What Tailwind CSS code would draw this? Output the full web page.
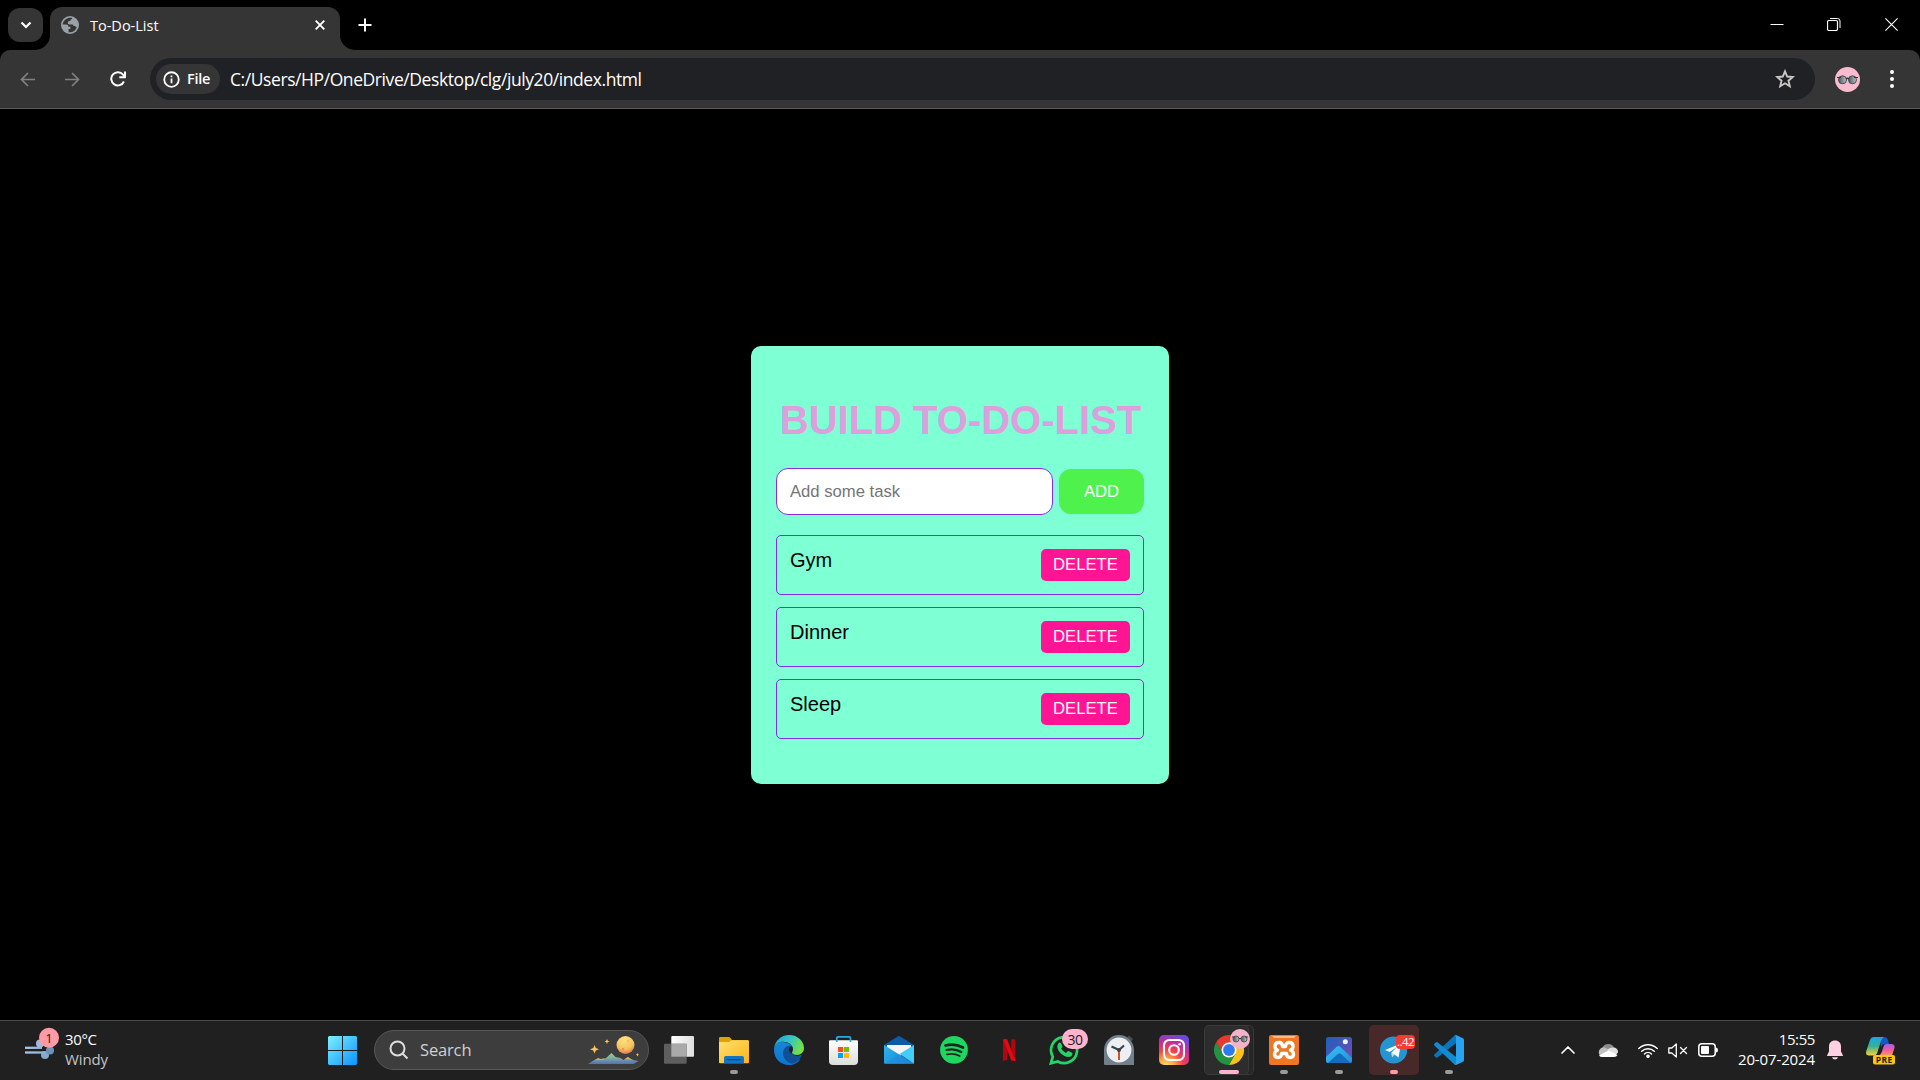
<!DOCTYPE html>
<html lang="en">
<head>
<meta charset="utf-8">
<title>To-Do-List</title>
<script src="https://cdn.jsdelivr.net/npm/@tailwindcss/browser@4"></script>
</head>
<body class="flex h-[1080px] w-[1920px] flex-col overflow-hidden bg-black font-['Open_Sans','Noto_Sans',sans-serif] text-white">

<!-- Tab strip -->
<header class="flex h-[50px] shrink-0 items-start bg-black">
  <button class="mt-2 ml-2 flex h-[34px] w-[35px] items-center justify-center rounded-xl bg-[#353535]">
    <svg class="h-[10px] w-[12px]" viewBox="0 0 12 10" fill="none" stroke="#fff" stroke-width="2.2"><path d="M1.5 2.5 6 7l4.500-4.500"/></svg>
  </button>
  <div class="relative mt-[7px] ml-[7px] flex h-[43px] w-[290px] items-start rounded-t-xl bg-[#353535]">
    <svg class="absolute bottom-0 -left-[15px] size-[15px]" viewBox="0 0 15 15"><path fill="#353535" d="M15 0v15H0A15 15 0 0 0 15 0"/></svg>
    <svg class="absolute -right-[15px] bottom-0 size-[15px]" viewBox="0 0 15 15"><path fill="#353535" d="M0 0v15h15A15 15 0 0 1 0 0"/></svg>
    <svg class="mt-[9px] ml-[11px] size-[18px]" viewBox="0 0 18 18"><circle cx="9" cy="9" r="9" fill="#9aa0a6"/><path fill="#353535" d="M6.800 2.200C3.800 3 1.800 5.700 1.700 8.600h3.400c1.700 0 2.200.9 2.300 2.200h2v2.100H7.600v3.300c3.700.7 7-1.500 8.200-4.900-.8 0-1.300-.4-1.600-1.200-1.300.1-2.100-.4-2.400-1.600H8.600c-1.200 0-1.800-.7-1.800-1.700 0-1.200.8-1.700 2-1.700h.5c0-1.200.6-1.900 1.800-2V2.100c-1.400-.5-2.800-.4-4.300.1Z"/></svg>
    <span class="mt-[7px] ml-[11px] w-[224px] text-[14.500px] leading-6">To-Do-List</span>
    <svg class="absolute top-[13px] left-[265px] size-[10px]" viewBox="0 0 10 10" stroke="#fff" stroke-width="1.900"><path d="m.7.7 8.600 8.600M9.300.7.7 9.300"/></svg>
  </div>
  <svg class="mt-[18px] ml-[18px] size-[14px]" viewBox="0 0 14 14" stroke="#fff" stroke-width="2"><path d="M7 .5v13M.5 7h13"/></svg>
  <div class="mt-[18px] mr-[22px] ml-auto flex gap-[43px]">
    <svg class="h-[13px] w-[14px]" viewBox="0 0 14 13"><path stroke="#fff" d="M.5 6.500h13"/></svg>
    <svg class="h-[13px] w-[14px]" viewBox="0 0 14 13" fill="none" stroke="#fff"><rect x=".5" y="2.500" width="10" height="10" rx="1.500" stroke-width="1.200"/><path d="M3 .5h7.500A2.500 2.500 0 0 1 13 3v7"/></svg>
    <svg class="ml-[1px] size-[13px]" viewBox="0 0 13 13" stroke="#fff" stroke-width="1.100"><path d="m.4.4 12.200 12.200M12.600.4.4 12.600"/></svg>
  </div>
</header>

<!-- Address toolbar -->
<nav class="flex h-[59px] shrink-0 items-center rounded-t-[10px] border-b border-[#5c5c5c] bg-[#353535]">
  <div class="ml-5 flex items-center gap-[30px]">
    <svg class="size-[15px]" viewBox="0 0 15 15" fill="none" stroke="#818181" stroke-width="1.700"><path d="M15 7.500H1.500M8 1 1.500 7.500 8 14"/></svg>
    <svg class="size-[15px]" viewBox="0 0 15 15" fill="none" stroke="#818181" stroke-width="1.700"><path d="M0 7.500h13.500M7 1l6.500 6.500L7 14"/></svg>
    <svg class="size-4" viewBox="0 0 16 16" fill="none" stroke="#fff" stroke-width="2"><path d="M13.900 10.500A6.600 6.600 0 1 1 13 3.700L15 6"/><path d="M15 .5v5.800H9.300"/></svg>
  </div>
  <div class="ml-6 flex h-[42px] w-[1665px] items-center rounded-full bg-[#202124] pr-5 pl-[6px]">
    <div class="flex h-[30px] w-16 items-center rounded-full bg-[#353535] pl-[7px]">
      <svg class="size-[17px]" viewBox="0 0 18 18" fill="none" stroke="#fff" stroke-width="1.900"><circle cx="9" cy="9" r="7.700"/><path d="M9 8v5M9 4.800v1.900"/></svg>
      <span class="ml-[7px] text-[14.500px] font-semibold tracking-[-0.3px]">File</span>
    </div>
    <span class="ml-[10px] text-[17.500px] tracking-[-0.420px] whitespace-nowrap">C:/Users/HP/OneDrive/Desktop/clg/july20/index.html</span>
    <svg class="ml-auto size-5" viewBox="0 0 20 20" fill="none" stroke="#c7c7c7" stroke-width="1.900"><path d="m10 2.300 2.200 5.200 5.600.5-4.300 3.700 1.300 5.500L10 14.300l-4.800 2.900 1.300-5.500L2.200 8l5.600-.5z"/></svg>
  </div>
  <svg class="ml-5 size-[25px]" viewBox="0 0 25 25"><defs><linearGradient id="lens"><stop stop-color="#46555b"/><stop offset="1" stop-color="#b5c8cb"/></linearGradient></defs><circle cx="12.500" cy="12.500" r="12.500" fill="#f8bbd0"/><g stroke="#4e4a4c" fill="url(#lens)"><circle cx="7.500" cy="12.800" r="4"/><circle cx="17.500" cy="12.800" r="4"/></g><path d="M2 10.500h4m13 0h4M11 12q1.500-1.500 3 0" stroke="#3d3437" stroke-width="1.200" fill="none"/></svg>
  <svg class="ml-[30px] h-[18px] w-1" viewBox="0 0 4 18" fill="#fff"><circle cx="2" cy="2" r="2"/><circle cx="2" cy="9" r="2"/><circle cx="2" cy="16" r="2"/></svg>
</nav>

<!-- Page -->
<main class="flex grow items-center justify-center bg-black font-['Liberation_Sans',Arial,sans-serif]">
  <section class="h-[438px] w-[418px] rounded-[10px] bg-[#7fffd4] px-[25px] pt-[51px]">
    <h1 class="pl-px text-center text-[40px] leading-[46px] font-bold whitespace-nowrap text-[#dda0dd]">BUILD TO-DO-LIST</h1>
    <form class="mt-[25px] flex items-center gap-[6px]">
      <input class="h-[47px] w-[277px] rounded-[12px] border border-[#8a2be2] bg-white px-[13px] pt-[2px] text-[16.670px] text-black placeholder:text-[#757575]" placeholder="Add some task">
      <button type="button" class="h-[45px] w-[85px] rounded-[12px] bg-[#4ff14c] text-[16.670px]">ADD</button>
    </form>
    <ul class="mt-5 flex flex-col gap-3 text-xl leading-[23px] text-black">
      <li class="flex h-[60px] items-start justify-between rounded-[5px] border border-[#8a2be2] p-[13px]"><span>Gym</span><button class="h-8 w-[89px] rounded-[5px] bg-[#ff1493] text-[16.670px] leading-8 text-white">DELETE</button></li>
      <li class="flex h-[60px] items-start justify-between rounded-[5px] border border-[#8a2be2] p-[13px]"><span>Dinner</span><button class="h-8 w-[89px] rounded-[5px] bg-[#ff1493] text-[16.670px] leading-8 text-white">DELETE</button></li>
      <li class="flex h-[60px] items-start justify-between rounded-[5px] border border-[#8a2be2] p-[13px]"><span>Sleep</span><button class="h-8 w-[89px] rounded-[5px] bg-[#ff1493] text-[16.670px] leading-8 text-white">DELETE</button></li>
    </ul>
  </section>
</main>

<!-- Taskbar -->
<footer class="flex h-[60px] shrink-0 items-center bg-[#202020] shadow-[inset_0_1px_0_#484848]">
  <div class="flex w-[328px] shrink-0 items-center pl-[25px]">
    <svg class="size-[30px] overflow-visible" viewBox="0 0 30 30"><defs><linearGradient id="wind" gradientUnits="userSpaceOnUse" x2="28"><stop stop-color="#a9c6e4"/><stop offset="1" stop-color="#86a9cc"/></linearGradient></defs><circle cx="15" cy="8.500" r="4" fill="#a5b9dc"/><circle cx="20" cy="20" r="4" fill="#86a9cc"/><circle cx="25" cy="15.500" r="4" fill="#6f93b5"/><g fill="none" stroke="url(#wind)" stroke-width="2.300"><path d="M0 12.800h17"/><path d="M0 17.500h20"/></g><circle cx="24" cy="2.700" r="10" fill="#ff99a4"/><text x="24" y="7.500" text-anchor="middle" font-size="13" fill="#222">1</text></svg>
    <div class="-mt-[3px] ml-[10px] text-[15px] leading-5 tracking-[-0.35px]"><div>30°C</div><div class="tracking-[-0.1px] text-[#c4c4c4]">Windy</div></div>
  </div>
  <svg class="size-[29px] shrink-0" viewBox="0 0 29 29"><defs><linearGradient id="win" x2="1" y2="1"><stop stop-color="#7df0ff"/><stop offset="1" stop-color="#0a93ff"/></linearGradient></defs><path fill="url(#win)" d="M1 0h13v14H0V1zM15 0h13l1 1v13H15zM0 15h14v14H1l-1-1zM15 15h14v13l-1 1H15z"/></svg>
  <div class="ml-[17px] flex h-10 w-[275px] shrink-0 items-center rounded-full border border-[#575757] bg-[#3d3d3d] pl-[14px]">
    <svg class="size-5" viewBox="0 0 20 20" fill="none" stroke="#dedede" stroke-width="2"><circle cx="8.500" cy="8.500" r="7"/><path d="m13.500 13.500 5 5"/></svg>
    <span class="ml-[11px] pt-px text-[16.500px] tracking-[-0.150px] text-[#d0d0d0]">Search</span>
    <svg class="mr-[9px] ml-auto h-[30px] w-[51px]" viewBox="0 0 51 30"><defs><radialGradient id="moon" cx=".45" cy=".2" r=".85"><stop stop-color="#ffe27a"/><stop offset=".6" stop-color="#f8c463"/><stop offset="1" stop-color="#db6e4b"/></radialGradient><linearGradient id="hill" x2="0" y2="1"><stop stop-color="#9fcf91"/><stop offset=".5" stop-color="#7ba79d"/><stop offset="1" stop-color="#526fbc"/></linearGradient></defs><circle cx="37.500" cy="10" r="9" fill="url(#moon)"/><circle cx="35" cy="14" r="1.300" fill="#e59650"/><circle cx="40" cy="6" r="1" fill="#f0bb5e"/><path fill="#f5ca59" d="m6.500 10 1.300 3 3.200 1.200-3.200 1.200-1.300 3.100-1.200-3.100L2 14.200 5.300 13zM19 4l.8 1.700 1.800.7-1.800.7L19 9l-.8-1.900-1.800-.7 1.800-.7zM49.500 18l.6 1.300 1 .5-1 .5-.6 1.200-.6-1.200-1-.5 1-.5z"/><path fill="url(#hill)" d="M0 29l8-5 5 1 5-2 5.500-5 4 4 5 1 3 2 4-3 5 3 6 1-5 3z"/><path d="m7 25 3-2 3 1 4-1-2 2zm30-1 3-2 3 2 3 1z" fill="#dba85b"/></svg>
  </div>
  <div class="ml-[3px] flex h-[60px] shrink-0 items-center">
    <div class="flex w-[55px] justify-center pr-px">
      <svg class="size-[30px]" viewBox="0 0 30 30"><defs><linearGradient id="tv" x2="1"><stop stop-color="#fff"/><stop offset="1" stop-color="#dedede"/></linearGradient></defs><rect x="7.300" y="1" width="22.700" height="20.700" rx="1" fill="url(#tv)"/><rect y="8.700" width="22.700" height="20" rx="1" fill="#5e5e5e"/><path d="M7.300 8.700h15.400v13H7.300z" fill="#aaa"/></svg>
    </div>
    <div class="relative flex w-[55px] justify-center pr-px">
      <svg class="size-[30px]" viewBox="0 0 30 30"><defs><linearGradient id="fol" x2="1" y2="1"><stop stop-color="#ffe072"/><stop offset="1" stop-color="#fbb514"/></linearGradient></defs><path fill="#e2a008" d="M0 7V3.200Q0 2 1.200 2h8.500q1 0 1.600.8L13 5h16v3H0z"/><path fill="url(#fol)" d="M0 7h10l2.500-1.800H29q1 0 1 1v21q0 1-1 1H1q-1 0-1-1z"/><path fill="#1473c5" d="M5 28.300V23q0-2 2-2h16q2 0 2 2v5.300z"/><path d="M8.500 24.700h13" stroke="#0c4a86" stroke-width="1.300"/></svg>
      <i class="absolute top-[35px] left-[23px] h-1 w-2 rounded-full bg-[#9a9a9a]"></i>
    </div>
    <div class="flex w-[55px] justify-center pr-px">
      <svg class="size-[30px]" viewBox="0 0 30 30"><defs><linearGradient id="eg" x2="1" y2=".3"><stop offset=".1" stop-color="#27a5df"/><stop offset=".6" stop-color="#39c7bd"/><stop offset="1" stop-color="#72e04b"/></linearGradient><linearGradient id="eb" x2="0" y2="1"><stop stop-color="#1687d4"/><stop offset="1" stop-color="#0b76d3"/></linearGradient></defs><path fill="url(#eb)" d="M0 15C0 9 4 7 8 7c7 0 12 4 11 8-5-4-9 3-3 8 3 2.700 7 3 10.500 1.200C24 28 19.500 30 15 30 6.500 30 0 23.500 0 15"/><path fill="#134f94" d="M9 19c0-5 3-8.500 6.500-8.500 2 0 3.500 1.500 3.700 3.300-3-.3-3.700 4.200 1.800 6.700 2.500.8 4.500 0 6-.8q1 0 .5 1C26 25 22 28.500 17.500 28.500 13 28 9.500 23 9 19"/><path fill="#202020" d="M15 14.500c0-2 1.500-3.500 3-3.200 1.300.4 1.700 2 1 3.300-1.400 1.400-1.200 3.200.5 4.400-2.500-.3-4.500-2-4.500-4.500"/><path fill="url(#eg)" d="M.2 13C1 6 7 0 15 0c9 0 15 6.500 15 13 0 4-3 7-7 7-3 0-5-1.200-5-2.500 0-.8 1-1.200 1-3.500C19 10 14.500 6.800 9 6.800 4 6.800 1 9.500.2 13"/></svg>
    </div>
    <div class="flex w-[55px] justify-center pr-px">
      <svg class="size-[30px]" viewBox="0 0 30 30"><defs><linearGradient id="st" x2="0" y2="1"><stop stop-color="#fff"/><stop offset="1" stop-color="#dcdcdc"/></linearGradient></defs><path d="M0 6.300q0-1 1-1h27q1 0 1 1V26q0 4-4 4H4q-4 0-4-4z" fill="url(#st)"/><path d="M7.800 7V3q0-1.200 1.200-1.200h11.300q1.200 0 1.200 1.200v4" fill="none" stroke="#28a8e4" stroke-width="1.700"/><path fill="#f25022" d="M9 12h5v5H9z"/><path fill="#7fba00" d="M15 12h5v5h-5z"/><path fill="#00a4ef" d="M9 18h5v5H9z"/><path fill="#ffb900" d="M15 18h5v5h-5z"/></svg>
    </div>
    <div class="flex w-[55px] justify-center pr-px">
      <svg class="size-[30px]" viewBox="0 0 30 30"><defs><linearGradient id="ml" x2="1" y2=".6"><stop stop-color="#2fb5ed"/><stop offset="1" stop-color="#1583d6"/></linearGradient></defs><path fill="#0c5ba8" d="M0 10 13.800 1.500q1.200-.8 2.400 0L30 10v3H0z"/><path fill="#f4f4f4" d="M3 10h24v3L15 22 3 13z"/><path fill="url(#ml)" d="m0 10 30 18.700H1q-1 0-1-1z"/><path fill="#43ccf5" d="M30 10v18.700L15.500 19z"/><path fill="#1e8edd" d="m15 19 14.500 9.700H1z" opacity=".6"/></svg>
    </div>
    <div class="flex w-[55px] justify-center pr-px">
      <svg class="size-[30px]" viewBox="0 0 30 30"><circle cx="15" cy="14.800" r="13.900" fill="#1ed760"/><g fill="none" stroke="#1b2a20" stroke-linecap="round"><path d="M6.500 10.500q9-2.500 17.500 2" stroke-width="2.700"/><path d="M7.500 15q8-2 14.800 2" stroke-width="2.200"/><path d="M8 19.300q7-1.500 12.700 1.700" stroke-width="1.800"/></g></svg>
    </div>
    <div class="flex w-[55px] justify-center pr-px">
      <svg class="size-[30px]" viewBox="0 0 30 30"><path fill="#b1060f" d="M9 4.300h4V25l-4 1zM17.200 4.300h4.100V26l-4.100-1z"/><path fill="#e50914" d="M9 4.300h4.100L21.300 26l-4-.6z"/></svg>
    </div>
    <div class="relative flex w-[55px] justify-center pr-px">
      <svg class="size-[30px]" viewBox="0 0 30 30"><path fill="none" stroke="#25d366" stroke-width="2.700" d="m1.900 28.300 1.900-6.700A13 13 0 1 1 8.800 26.500z"/><path fill="#25d366" d="M9.300 8.500q1.200-1.500 2.600-.5l1.500 3.400q.2.800-1.300 2.200 1.800 3.200 5 4.500l1.600-1.800q.6-.5 1.300-.1l3 1.500q.7.400.4 1.500-.8 2.700-4 2.700c-5 0-11.400-6-11-10.500q.1-1.800.9-2.900"/></svg>
      <span class="absolute -top-[6px] left-[25px] flex h-5 w-[26px] items-center justify-center rounded-full bg-[#ffb3cf] text-[14px] tracking-[-0.500px] text-[#222]">30</span>
    </div>
    <div class="flex w-[55px] justify-center pr-px">
      <svg class="size-[30px]" viewBox="0 0 30 30"><path fill="#4b4b4b" d="m22 4 3-3.500L29 4l-3 4z"/><path fill="#73808b" d="M0 15a15 15 0 0 1 30 0v15H1q-1 0-1-1z"/><circle cx="15" cy="15" r="12.400" fill="#edf0f2"/><path d="M7.500 11.500 15 15l5-4.500" fill="none" stroke="#3b444b" stroke-width="2.200"/><path d="M15 15v10" stroke="#d8501b" stroke-width="2"/><circle cx="15" cy="15" r="2" fill="#3b444b"/></svg>
    </div>
    <div class="flex w-[55px] justify-center pr-px">
      <svg class="size-[30px]" viewBox="0 0 30 30"><defs><radialGradient id="ig" cx=".25" cy="1.050" r="1.100"><stop stop-color="#ffdc62"/><stop offset=".22" stop-color="#fdb04b"/><stop offset=".5" stop-color="#f3414a"/><stop offset=".78" stop-color="#c22d9c"/><stop offset="1" stop-color="#6a4bd8"/></radialGradient></defs><rect width="30" height="30" rx="5" fill="url(#ig)"/><g fill="none" stroke="#fff" stroke-width="2.100"><rect x="5" y="5" width="20" height="20" rx="5.500"/><circle cx="15" cy="15" r="4.800"/></g><circle cx="20.600" cy="9.300" r="1.300" fill="#fff"/></svg>
    </div>
    <div class="relative flex h-[50px] w-[55px] items-center justify-center pr-px">
      <i class="absolute top-0 left-2 h-[50px] w-[44px] rounded-[5px] border border-[#383838] bg-[#262626]"></i>
      <i class="absolute top-0 left-[2px] h-[50px] w-[45px] rounded-[5px] border border-[#3a3a3a] bg-[#2d2d2d]"></i>
      <svg class="relative size-[30px] overflow-visible" viewBox="0 0 30 30"><path fill="#e33b2e" d="M2 7.500A15 15 0 0 1 28 7.500L15 8 9 19z"/><path fill="#fbc116" d="M28 7.500A15 15 0 0 1 15 30l6-11.500L15 7.500z"/><path fill="#229342" d="M2 7.500A15 15 0 0 0 15 30l6.500-11H9z"/><circle cx="15" cy="15" r="7.500" fill="#fff"/><circle cx="15" cy="15" r="5.900" fill="#2f7bed"/><circle cx="26" cy="4" r="10" fill="#f4b3ca"/><g stroke="#5b5458" fill="url(#lens)"><circle cx="22" cy="4" r="3"/><circle cx="30" cy="4" r="3"/></g><path d="M18 2h3m10 0h3M25 3.500h2" stroke="#40383c"/></svg>
      <i class="absolute top-[45px] left-[17px] h-1 w-5 rounded-full bg-[#ffb3cf]"></i>
    </div>
    <div class="relative flex w-[55px] justify-center pr-px">
      <svg class="size-[30px]" viewBox="0 0 30 30"><rect width="30" height="30" rx="2" fill="#ef7623"/><path d="M3 1h24l-2 2H5z" fill="#ffb98a"/><g fill="none" stroke="#fff" stroke-width="3.400" stroke-linejoin="round"><path d="M10 7.500q-4 0-4 3.700 0 3 2.500 4Q5.500 16.500 5.500 19q0 3.500 3.500 3.500 3.500 0 3.500-4h5q0 4 3.500 4t3.500-3.500q0-2.500-3-3.800 2.500-1 2.500-4 0-3.700-4-3.700-3.500 0-3.500 4h-3q0-4-3.500-4z"/></g></svg>
      <i class="absolute top-[35px] left-[23px] h-1 w-2 rounded-full bg-[#9a9a9a]"></i>
    </div>
    <div class="relative flex w-[55px] justify-center pr-px">
      <svg class="size-[30px]" viewBox="0 0 30 30"><defs><linearGradient id="pb" x1="0" y1="0" x2="1" y2="1"><stop stop-color="#1c60bd"/><stop offset="1" stop-color="#7b4bb5"/></linearGradient><linearGradient id="pm" x2="1" y2="1"><stop stop-color="#33c4f2"/><stop offset="1" stop-color="#238fe0"/></linearGradient></defs><rect x="2" y="2" width="26" height="26" rx="2.500" fill="url(#pb)"/><path fill="url(#pm)" d="M2 22 12.500 12q2-2 4 0L28 23v2.500q0 2.500-2.500 2.500h-21Q2 28 2 25.500z"/><path fill="#176bbb" d="m4 28 10-9q1.500-1.200 3 0l9.500 9z"/><circle cx="21.300" cy="6.700" r="2.500" fill="#eef6ff"/></svg>
      <i class="absolute top-[35px] left-[23px] h-1 w-2 rounded-full bg-[#9a9a9a]"></i>
    </div>
    <div class="relative flex h-[50px] w-[55px] items-center justify-center pr-px">
      <i class="absolute top-0 left-[2px] h-[50px] w-[50px] rounded-[5px] bg-[#482828]"></i>
      <svg class="relative size-[30px]" viewBox="0 0 30 30"><circle cx="14.600" cy="15" r="13.600" fill="#2495d1"/><path fill="#fff" d="m6 15 16-6.500-2.500 14-4-3-2.500 2.500-.5-4.500L18 12l-7.500 5z"/><path fill="#b5d8ec" d="m12.500 17.500.5 4.500 2.500-2.500z"/></svg>
      <span class="absolute top-[10px] left-[29px] flex h-[14px] w-[19px] items-center justify-center rounded-[4px] bg-[#f23c34] text-[11.500px] leading-none tracking-[-0.500px]">..42</span>
      <i class="absolute top-[45px] left-[23px] h-1 w-2 rounded-full bg-[#ff99a4]"></i>
    </div>
    <div class="relative flex w-[55px] justify-center pr-px">
      <svg class="size-[30px]" viewBox="0 0 30 30"><path fill="#0876bd" d="M22 0v8L3.500 22.500q-.8.500-1.500 0L.4 21q-.8-.8 0-1.600L20.500.6z"/><path fill="#1389d2" d="M22 30v-8L3.500 7.300Q2.700 6.800 2 7.300L.4 8.800q-.8.800 0 1.600l20 19z"/><path fill="#29a3f0" d="M20.500.6 22 0l7 3.300q1 .5 1 1.600v20.200q0 1.100-1 1.600L22 30l-1.500-.6q1.500 0 1.500-1.500V2q0-1.400-1.500-1.400"/></svg>
      <i class="absolute top-[35px] left-[23px] h-1 w-2 rounded-full bg-[#9a9a9a]"></i>
    </div>
  </div>
  <!-- System tray -->
  <div class="mr-[25px] ml-auto flex h-full shrink-0 items-center">
    <svg class="h-2 w-[14px]" viewBox="0 0 14 8" fill="none" stroke="#fff" stroke-width="1.700" stroke-linecap="round" stroke-linejoin="round"><path d="m1 7 6-6 6 6"/></svg>
    <svg class="ml-[23px] h-[14px] w-5" viewBox="0 0 20 14"><path fill="#8b8b8b" d="M4.500 5a6 5.500 0 0 1 11.500 0L12 9z"/><path fill="#c0c0c0" d="M4.500 14A4.700 4.700 0 1 1 7 4.400l9 5.500z"/><path fill="#e0e0e0" d="M9 7q2.500-3 6-2.500A4.500 4.500 0 0 1 20 9.500l-3 3z"/><path fill="#fff" d="M1 12.500 10.500 7.500l9 4.500q-1 2-3.500 2H4.500q-2.500 0-3.500-1.500"/></svg>
    <svg class="ml-5 h-[15px] w-5" viewBox="0 0 20 15" fill="none" stroke="#fff" stroke-width="1.400" stroke-linecap="round"><path d="M.8 5.500a13 13 0 0 1 18.400 0M3.700 8.300a9 9 0 0 1 12.600 0M6.500 11a5 5 0 0 1 7 0"/><circle cx="10" cy="13.200" r="1.100" fill="#fff"/></svg>
    <svg class="ml-[10px] h-[15px] w-5" viewBox="0 0 20 15" fill="none" stroke="#fff" stroke-width="1.300" stroke-linejoin="round" stroke-linecap="round"><path d="M.8 5h3l4.500-4v13L3.800 10h-3zM12.500 4.500l6 6M18.500 4.500l-6 6"/></svg>
    <svg class="ml-[10px] h-[14px] w-5" viewBox="0 0 20 14"><rect x=".8" y=".8" width="16.400" height="12.400" rx="3" fill="none" stroke="#fff" stroke-width="1.500"/><rect x="3" y="3" width="8" height="8" rx="1" fill="#fff"/><path d="M18 4.500q2 0 2 2.500t-2 2.500z" fill="#fff"/></svg>
    <div class="-mt-[3px] ml-[17px] w-20 text-right text-[15px] leading-5 tracking-[-0.120px] whitespace-nowrap"><div class="tracking-[-0.4px]">15:55</div><div>20-07-2024</div></div>
    <svg class="ml-3 h-5 w-4" viewBox="0 0 16 20" fill="#ffcfe2"><path d="M8 .5c3.800 0 6 2.500 6 6v5l1.900 3.700q.2.800-.7.800H.8q-.9 0-.7-.8L2 11.500v-5C2 3 4.200.5 8 .5M5 17.200h6q-.7 2.300-3 2.300t-3-2.300"/></svg>
    <svg class="ml-[23px] size-[29px]" viewBox="0 0 29 29"><defs><linearGradient id="ca" x2="0" y2="1"><stop stop-color="#1ba3ee"/><stop offset=".5" stop-color="#35b293"/><stop offset="1" stop-color="#ffd02f"/></linearGradient><linearGradient id="cb" x2="0" y2="1"><stop stop-color="#a45cf0"/><stop offset=".5" stop-color="#ef5aa3"/><stop offset="1" stop-color="#ff9a52"/></linearGradient></defs><path fill="#1757c8" d="M14 1h4q3 0 4 3l1 4h-4q-3 0-4 3z"/><path fill="url(#ca)" d="M8 1h10q-2 1-3 4l-3.500 11q-1 3.500-4 3.500H3Q-.8 19.500.3 15L4 4q1-3 4-3"/><path fill="url(#cb)" d="M20 8h5.500q4 0 2.800 4.500L26 19.500H13q2-.8 3-4l1.500-5Q18 8 20 8"/><rect x="7" y="19" width="22" height="9.500" rx="2" fill="#ffc40d"/><text x="18.200" y="26.800" text-anchor="middle" font-size="8.500" font-weight="700" letter-spacing=".4" fill="#222">PRE</text></svg>
  </div>
</footer>
</body>
</html>
